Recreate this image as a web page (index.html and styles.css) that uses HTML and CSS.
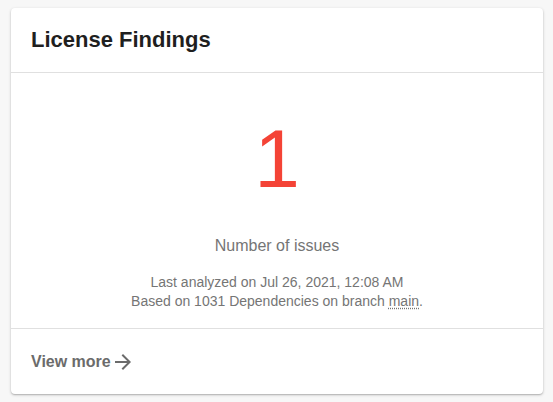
FILE: index.html
```html
<!DOCTYPE html>
<html lang="en">
<head>
<meta charset="utf-8">
<title>License Findings</title>
<link rel="stylesheet" href="styles.css">
</head>
<body>
  <div class="card">
    <div class="card-header">
      <h2 class="title">License Findings</h2>
    </div>
    <div class="card-body">
      <div class="count">1</div>
      <div class="label">Number of issues</div>
      <div class="meta">
        <div>Last analyzed on Jul 26, 2021, 12:08 AM</div>
        <div>Based on 1031 Dependencies on branch <abbr class="branch" title="main">main</abbr>.</div>
      </div>
    </div>
    <div class="card-footer">
      <a class="view-more" href="#">View more
        <svg class="arrow" width="24" height="24" viewBox="0 0 24 24" aria-hidden="true"><path d="M12 4l-1.41 1.41L16.17 11H4v2h12.17l-5.58 5.59L12 20l8-8z" fill="currentColor"/></svg>
      </a>
    </div>
  </div>
</body>
</html>
```
FILE: styles.css
```css
html, body {
  margin: 0;
  background: #f7f7f7;
}
body {
  padding: 8px 10px 8px 11px;
  font-family: "Liberation Sans", Arial, sans-serif;
  color: #757575;
}
.card {
  background: #fff;
  border-radius: 4px;
  box-shadow: 0 1px 3px rgba(0,0,0,0.22), 0 1px 1px rgba(0,0,0,0.12);
  display: flex;
  flex-direction: column;
}
.card-header {
  height: 64px;
  padding: 0 20px;
  display: flex;
  align-items: center;
  border-bottom: 1px solid #e0e0e0;
}
.title {
  margin: 0;
  font-size: 22px;
  line-height: 28px;
  font-weight: 700;
  color: #1f1f1f;
}
.card-body {
  height: 256px;
  box-sizing: border-box;
  padding-top: 45px;
  display: flex;
  flex-direction: column;
  align-items: center;
  text-align: center;
  border-bottom: 1px solid #e0e0e0;
}
.count {
  font-size: 82px;
  line-height: 82px;
  color: #f44336;
}
.label {
  margin-top: 34px;
  font-size: 16px;
  line-height: 24px;
  color: #757575;
}
.meta {
  margin-top: 15px;
  font-size: 14px;
  line-height: 19px;
  color: #757575;
}
.branch {
  text-decoration: underline dotted;
  text-underline-offset: 2px;
  cursor: help;
}
.card-footer {
  height: 65px;
  padding: 0 20px;
  display: flex;
  align-items: center;
}
.view-more {
  display: flex;
  align-items: center;
  gap: 0;
  font-size: 16px;
  line-height: 24px;
  font-weight: 700;
  color: #6b6b6b;
  text-decoration: none;
}
.arrow {
  display: block;
  color: #6b6b6b;
}
```
